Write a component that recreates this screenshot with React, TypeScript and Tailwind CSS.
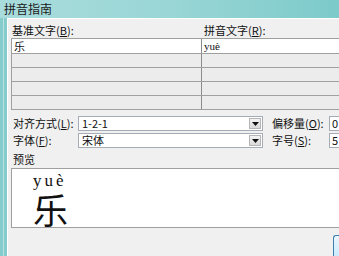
import React from "react";

const cjk = { fontFamily: '"Noto Sans CJK SC", "Liberation Sans", sans-serif' };

function Combo({ text }: { text: string }) {
  return (
    <div className="flex h-[15px] w-[185px] shrink-0 items-stretch border border-[#a5acb5] bg-white">
      <div className="flex flex-1 items-center pl-[3px] text-[11px] leading-none text-[#111]">{text}</div>
      <div className="m-[1px] flex w-[12px] items-center justify-center border border-[#b5b5b5] bg-gradient-to-b from-[#f4f4f4] to-[#d9d9d9]">
        <svg width="7" height="4" viewBox="0 0 7 4">
          <path d="M0 0 L7 0 L3.5 4 Z" fill="#111" />
        </svg>
      </div>
    </div>
  );
}

export default function App() {
  const rows = [0, 1, 2, 3, 4];
  return (
    <div className="flex h-[256px] w-[339px] flex-col overflow-hidden bg-[#f0f0f0]" style={cjk}>
      <div className="flex h-[20px] items-center bg-gradient-to-r from-[#a9dcdc] via-[#9ad6d6] to-[#7ccaca] pl-[4px] text-[12px] text-[#1a1a1a]">
        拼音指南
      </div>
      <div className="flex flex-1">
        <div className="flex w-[7px] bg-[#86cccc]">
          <div className="ml-[3px] w-[1px] bg-[#b6e2e2]" />
        </div>
        <div className="flex flex-1 flex-col border-t border-l border-white bg-[#f0f0f0] pl-[3px]">
          <div className="mt-[4px] flex h-[14px] items-center whitespace-nowrap text-[11px] leading-none text-[#111]">
            <div className="w-[191px] pl-[1px]">基准文字(<span className="underline">B</span>):</div>
            <div className="pl-[2px]">拼音文字(<span className="underline">R</span>):</div>
          </div>
          <div className="mt-[1px] flex flex-col border-t border-l border-[#a0a0a0]">
            {rows.map((r) => (
              <div
                key={r}
                className={`flex ${r === 0 ? "h-[15px] bg-white" : "h-[14px] bg-[#ececec]"} border-b border-[#a0a0a0]`}
              >
                <div className="flex w-[190px] items-center border-r border-[#8c8c8c] pl-[2px] text-[11px] leading-none text-[#111]">
                  {r === 0 ? "乐" : ""}
                </div>
                <div
                  className="flex flex-1 items-center pl-[2px] text-[11px] leading-none text-[#111]"
                  style={{ fontFamily: '"Liberation Serif", serif' }}
                >
                  {r === 0 ? "yuè" : ""}
                </div>
              </div>
            ))}
          </div>
          <div className="mt-[6px] flex h-[15px] items-center whitespace-nowrap text-[11px] leading-none text-[#111]">
            <div className="w-[67px] shrink-0 pl-[2px]">对齐方式(<span className="underline">L</span>):</div>
            <Combo text="1-2-1" />
            <div className="w-[66px] shrink-0 pl-[9px]">偏移量(<span className="underline">O</span>):</div>
            <div className="flex h-[15px] flex-1 items-center border border-r-0 border-[#a5acb5] bg-white pl-[2px]">0</div>
          </div>
          <div className="mt-[2px] flex h-[15px] items-center whitespace-nowrap text-[11px] leading-none text-[#111]">
            <div className="w-[67px] shrink-0 pl-[2px]">字体(<span className="underline">F</span>):</div>
            <Combo text="宋体" />
            <div className="w-[66px] shrink-0 pl-[9px]">字号(<span className="underline">S</span>):</div>
            <div className="flex h-[15px] flex-1 items-center border border-r-0 border-[#a5acb5] bg-white pl-[2px]">5</div>
          </div>
          <div className="mt-[4px] flex h-[14px] items-center pl-[2px] text-[11px] leading-none text-[#111]">预览</div>
          <div className="mt-[2px] flex h-[60px] flex-col border border-r-0 border-[#a0a0a0] bg-white pl-[21px]">
            <div
              className="mt-[5px] h-[14px] text-[17px] leading-[14px] tracking-[3px] text-[#111]"
              style={{ fontFamily: '"Liberation Serif", serif' }}
            >
              yuè
            </div>
            <div className="mt-[3px] h-[35px] text-[35px] leading-[35px] text-[#111]">乐</div>
          </div>
          <div className="flex flex-1 justify-end pt-[7px]">
            <div className="h-[30px] w-[6px] rounded-tl-[3px] border-l border-t border-[#3c7fb1] bg-gradient-to-b from-[#eaf6fd] to-[#bee6fd]" />
          </div>
        </div>
      </div>
    </div>
  );
}
